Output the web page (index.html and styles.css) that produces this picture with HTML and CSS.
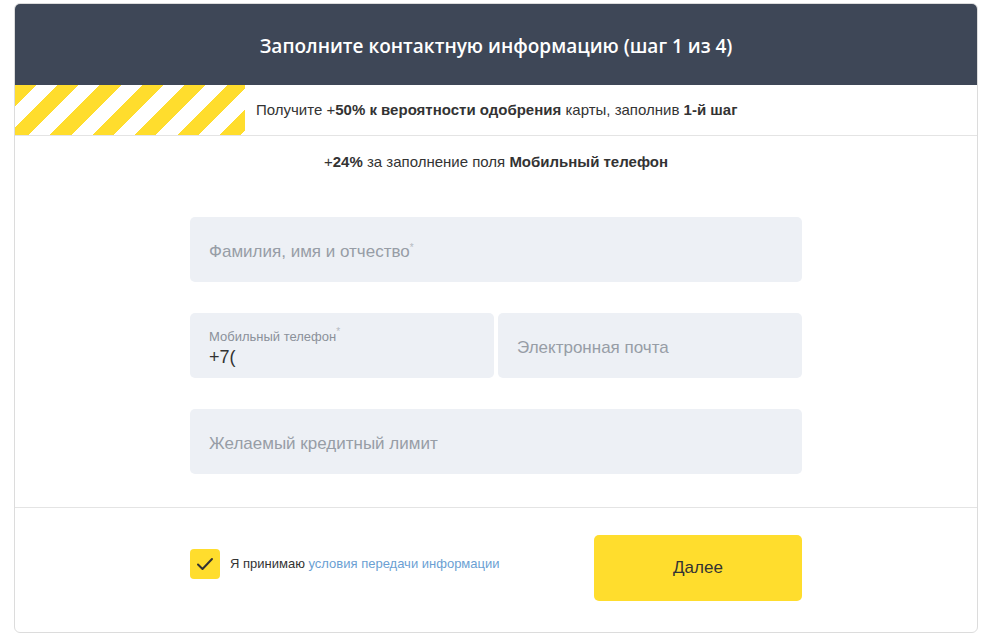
FILE: index.html
```html
<!DOCTYPE html>
<html lang="ru">
<head>
    <meta charset="UTF-8">
    <meta name="viewport" content="width=device-width, initial-scale=1.0">
    <title>Контактная информация</title>
    <link rel="stylesheet" href="styles.css">
</head>
<body>
    <div class="card">
        <div class="card-header">
            <h1>Заполните контактную информацию (шаг 1 из 4)</h1>
        </div>

        <div class="promo">
            <div class="promo-stripes"></div>
            <p class="promo-text">Получите +<b>50%</b> <b>к вероятности одобрения</b> карты, заполнив <b>1-й шаг</b></p>
        </div>

        <p class="hint">+<b>24%</b> за заполнение поля <b>Мобильный телефон</b></p>

        <div class="form">
            <div class="field">
                <span class="placeholder">Фамилия, имя и отчество<sup>*</sup></span>
            </div>

            <div class="field-row">
                <div class="field field-filled">
                    <span class="field-label">Мобильный телефон<sup>*</sup></span>
                    <span class="field-value">+7(</span>
                </div>
                <div class="field">
                    <span class="placeholder">Электронная почта</span>
                </div>
            </div>

            <div class="field">
                <span class="placeholder">Желаемый кредитный лимит</span>
            </div>
        </div>

        <div class="card-footer">
            <div class="footer-inner">
                <label class="agree">
                    <span class="checkbox">
                        <svg width="18" height="14" viewBox="0 0 18 14">
                            <path d="M2 7.5 L6.5 12 L16 2" fill="none" stroke="#333" stroke-width="2" stroke-linecap="round" stroke-linejoin="round"/>
                        </svg>
                    </span>
                    <span>Я принимаю <a href="#">условия передачи информации</a></span>
                </label>
                <button class="next">Далее</button>
            </div>
        </div>
    </div>
</body>
</html>
```

FILE: styles.css
```css
body {
    font-family: 'Liberation Sans', Arial, sans-serif;
    margin: 0;
    padding: 3px 19px 0 14px;
    background: #fff;
    color: #333;
}
.card {
    border: 1px solid #dcdcdc;
    border-radius: 6px;
    overflow: hidden;
    background: #fff;
}
.card-header {
    background-color: #3e4757;
    height: 81px;
    padding-top: 2px;
    box-sizing: border-box;
    display: flex;
    align-items: center;
    justify-content: center;
}
h1 {
    margin: 0;
    font-family: 'Open Sans', sans-serif;
    font-weight: 600;
    font-size: 19px;
    color: #fff;
}
.promo {
    display: flex;
    align-items: center;
    height: 50px;
    border-bottom: 1px solid #e4e4e4;
}
.promo-stripes {
    width: 230px;
    height: 100%;
    background: repeating-linear-gradient(135deg, #ffdd2d 0 15px, #fff 15px 30px);
}
.promo-text {
    margin: 0 0 2px 11px;
    font-size: 15px;
}
.hint {
    margin: 17px 0 0;
    text-align: center;
    font-size: 15px;
}
.form {
    width: 612px;
    margin: 47px auto 33px;
    display: flex;
    flex-direction: column;
    gap: 31px;
}
.field-row {
    display: flex;
    gap: 4px;
}
.field-row .field {
    flex: 1;
}
.field {
    height: 65px;
    background: #edf0f5;
    border-radius: 5px;
    padding: 5px 19px 0;
    display: flex;
    flex-direction: column;
    justify-content: center;
    box-sizing: border-box;
}
.placeholder {
    font-size: 17px;
    color: #979da6;
}
sup {
    font-size: 10px;
    color: #b5bac1;
    vertical-align: 6px;
    line-height: 0;
}
.field-label {
    font-size: 13px;
    color: #8b919a;
}
.field-value {
    font-size: 18px;
    color: #333;
    margin-top: 3px;
}
.card-footer {
    border-top: 1px solid #e4e4e4;
    padding: 27px 0 31px;
}
.footer-inner {
    width: 612px;
    margin: 0 auto;
    display: flex;
    justify-content: space-between;
    align-items: center;
}
.agree {
    display: flex;
    align-items: center;
    gap: 10px;
    font-size: 13px;
    color: #333;
    margin-bottom: 9px;
}
.agree a {
    color: #6b9fd3;
    text-decoration: none;
}
.checkbox {
    width: 30px;
    height: 30px;
    background: #ffdd2d;
    border-radius: 4px;
    display: flex;
    align-items: center;
    justify-content: center;
}
.next {
    width: 208px;
    height: 66px;
    background-color: #ffdd2d;
    border: none;
    border-radius: 5px;
    font-family: 'Liberation Sans', Arial, sans-serif;
    font-size: 17px;
    color: #333;
    cursor: pointer;
}
```
